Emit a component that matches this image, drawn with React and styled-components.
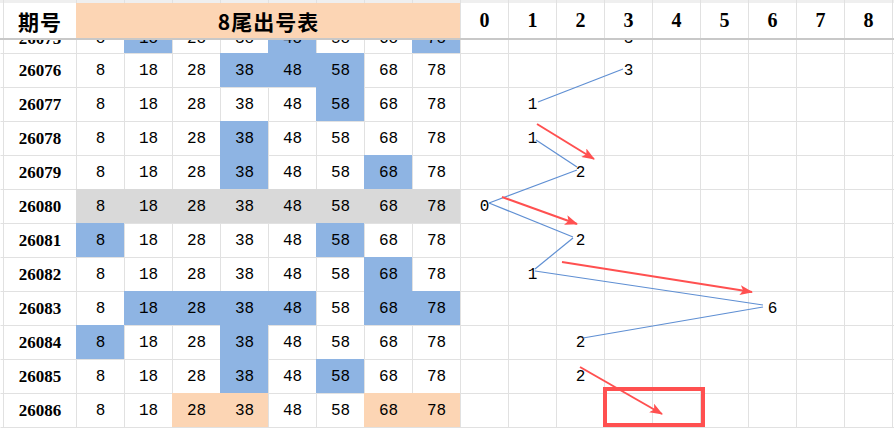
import styled, { createGlobalStyle } from "styled-components";

const GRID = "#E1E1E1";
const FILLS = { b: "#8EB4E3", p: "#FCD5B4", g: "#D9D9D9" };
const NUMS = [8, 18, 28, 38, 48, 58, 68, 78];

const GlobalStyle = createGlobalStyle`
  html, body {
    margin: 0;
    padding: 0;
    background: #fff;
    overflow: hidden;
  }
`;

const Sheet = styled.div`
  position: relative;
  width: 894px;
  height: 428px;
  overflow: hidden;
  display: flex;
  flex-direction: column;
  background: #fff;
`;

const Row = styled.div`
  display: grid;
  grid-template-columns: 3px 73px repeat(17, 48px) 1fr;
  height: ${(p) => p.$h}px;
  flex-shrink: 0;
  background: ${(p) => p.$bg || "transparent"};
  border-bottom: ${(p) => (p.$frozen ? "2px solid #C8C8C8" : "none")};
`;

const Clip = styled.div`
  height: 13px;
  overflow: hidden;
  flex-shrink: 0;
  & > div {
    margin-top: -19px;
  }
`;

const Cell = styled.div`
  box-sizing: border-box;
  border-left: 1px solid ${(p) => (p.$edge ? "transparent" : p.$fill || GRID)};
  border-top: ${(p) => (p.$noTop ? "none" : `1px solid ${p.$fill || GRID}`)};
  background: ${(p) => p.$fill || "transparent"};
  display: flex;
  align-items: center;
  justify-content: center;
  color: #000;
  font-family: "Liberation Mono", "DejaVu Sans Mono", monospace;
  font-size: 16px;
  overflow: hidden;
  white-space: nowrap;
`;

const PeriodCell = styled(Cell)`
  font-family: "Liberation Serif", "DejaVu Serif", serif;
  font-weight: 700;
  font-size: 17px;
`;

const TitleCell = styled(Cell)`
  grid-column: span ${(p) => p.$span || 1};
  font-family: "Noto Sans CJK SC", "Liberation Serif", sans-serif;
  font-weight: 700;
  font-size: 21px;
  letter-spacing: 1px;
`;

const HeadDigit = styled(Cell)`
  font-family: "Liberation Serif", "DejaVu Serif", serif;
  font-weight: 700;
  font-size: 20px;
`;

const Overlay = styled.svg`
  position: absolute;
  left: 0;
  top: 0;
  pointer-events: none;
`;

const rows = [
  { id: "26076", f: "...bbb..", v: 3 },
  { id: "26077", f: ".....b..", v: 1 },
  { id: "26078", f: "...b....", v: 1 },
  { id: "26079", f: "...b..b.", v: 2 },
  { id: "26080", f: "gggggggg", v: 0 },
  { id: "26081", f: "b....b..", v: 2 },
  { id: "26082", f: "......b.", v: 1 },
  { id: "26083", f: ".bbbb.bb", v: 6 },
  { id: "26084", f: "b..b....", v: 2 },
  { id: "26085", f: "...b.b..", v: 2 },
  { id: "26086", f: "..pp..pp", v: null },
];

const blueLines = [
  [623, 69, 538, 102],
  [536, 140, 577, 167],
  [577, 170, 489, 203],
  [489, 203, 573, 237],
  [573, 238, 535, 269],
  [535, 271, 763, 305],
  [763, 307, 583, 338],
];

const redArrows = [
  [537, 124, 594, 159],
  [502, 197, 577, 224],
  [562, 262, 752, 292],
  [580, 367, 662, 414],
];

function DataRow({ id, f, v, h = 34 }) {
  return (
    <Row $h={h}>
      <Cell $edge />
      <PeriodCell>{id}</PeriodCell>
      {NUMS.map((n, i) => (
        <Cell key={n} $fill={FILLS[f[i]]}>
          {n}
        </Cell>
      ))}
      {Array.from({ length: 9 }, (_, c) => (
        <Cell key={"c" + c}>{v === c ? c : ""}</Cell>
      ))}
      <Cell />
    </Row>
  );
}

export default function App() {
  return (
    <>
      <GlobalStyle />
      <Sheet>
        <Row $h={3} $bg="#EFEFEF">
          <Cell $edge $noTop />
          <Cell $noTop />
          {Array.from({ length: 17 }, (_, i) => (
            <Cell key={i} $noTop />
          ))}
          <Cell $noTop />
        </Row>
        <Row $h={35} $frozen>
          <Cell $edge $noTop />
          <TitleCell $noTop>期号</TitleCell>
          <TitleCell $noTop $span={8} $fill={FILLS.p}>
            8尾出号表
          </TitleCell>
          {Array.from({ length: 9 }, (_, c) => (
            <HeadDigit key={c} $noTop>
              {c}
            </HeadDigit>
          ))}
          <Cell $noTop />
        </Row>
        <Clip>
          <DataRow id="26075" f=".b..b..b" v={3} />
        </Clip>
        {rows.map((r) => (
          <DataRow key={r.id} {...r} />
        ))}
        <Row $h={3}>
          <Cell $edge />
          <Cell />
          {Array.from({ length: 17 }, (_, i) => (
            <Cell key={i} />
          ))}
          <Cell />
        </Row>
        <Overlay width="894" height="428" viewBox="0 0 894 428">
          <defs>
            <marker
              id="head"
              markerUnits="userSpaceOnUse"
              markerWidth="14"
              markerHeight="10"
              refX="12"
              refY="5"
              orient="auto"
            >
              <path d="M0,0 L13,5 L0,10 L3,5 z" fill="#FF5050" />
            </marker>
          </defs>
          {blueLines.map(([x1, y1, x2, y2], i) => (
            <line key={i} x1={x1} y1={y1} x2={x2} y2={y2} stroke="#5F8FD3" strokeWidth="1.2" />
          ))}
          {redArrows.map(([x1, y1, x2, y2], i) => (
            <line
              key={i}
              x1={x1}
              y1={y1}
              x2={x2}
              y2={y2}
              stroke="#FF5050"
              strokeWidth="2"
              markerEnd="url(#head)"
            />
          ))}
          <rect x="605" y="389" width="98" height="36" fill="none" stroke="#FF5050" strokeWidth="4" />
        </Overlay>
      </Sheet>
    </>
  );
}
